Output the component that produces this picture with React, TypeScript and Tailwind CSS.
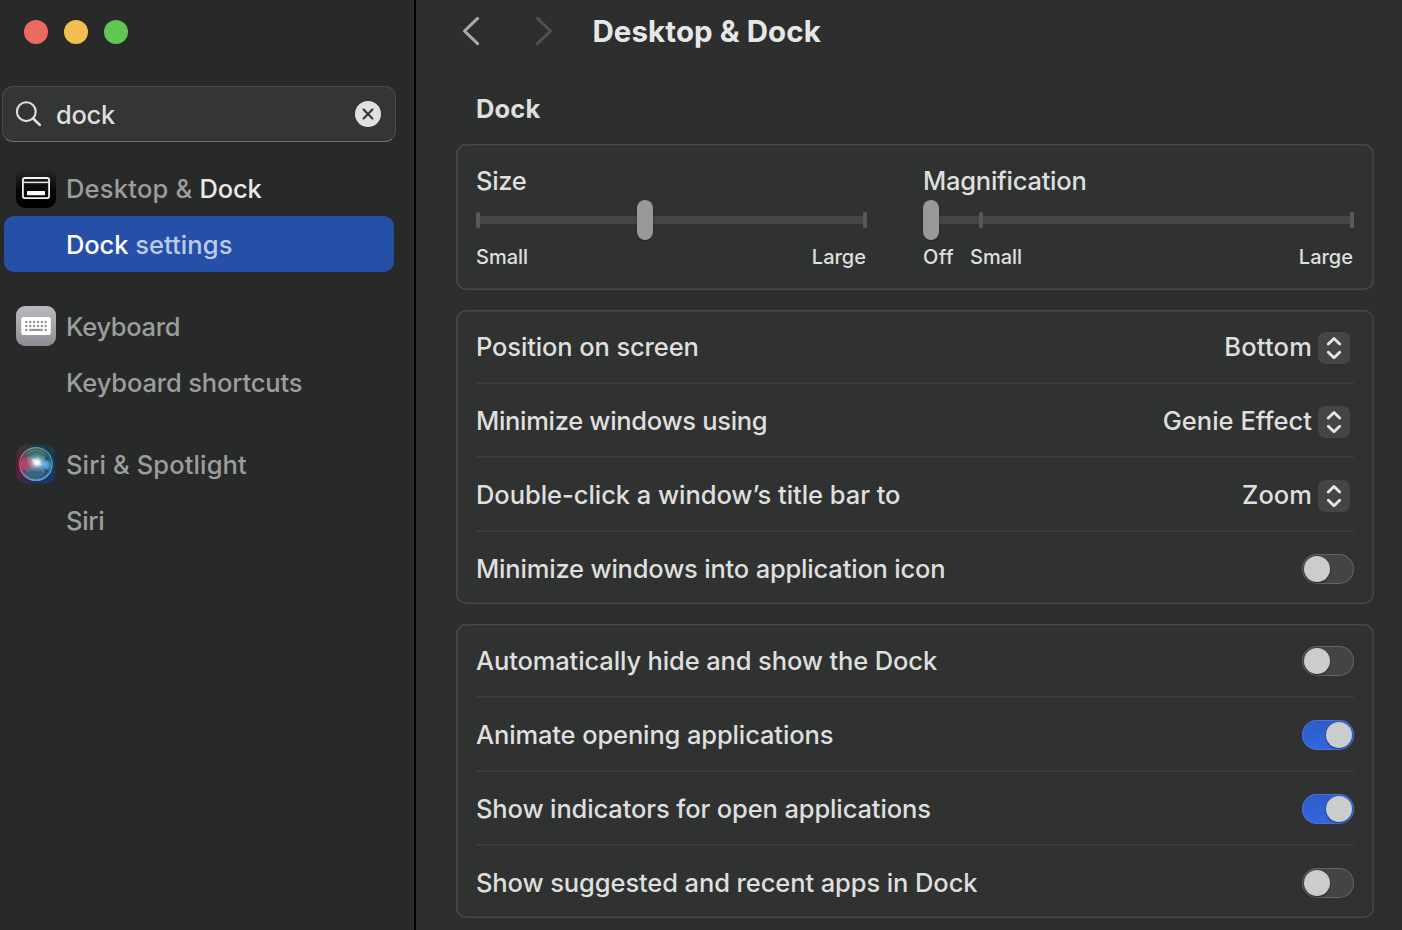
import { useState, type ReactNode } from 'react';

function DesktopDockIcon() {
  return (
    <svg width="40" height="40" viewBox="0 0 40 40" className="shrink-0">
      <defs>
        <linearGradient id="deskBg" x1="0" y1="0" x2="0" y2="1">
          <stop offset="0" stopColor="#2a2a2a" />
          <stop offset="0.6" stopColor="#030303" />
          <stop offset="1" stopColor="#000" />
        </linearGradient>
      </defs>
      <rect width="40" height="40" rx="9" fill="url(#deskBg)" />
      <rect x="6.9" y="10" width="26.2" height="20.2" rx="2.2" fill="none" stroke="#f2f2f2" strokeWidth="1.8" />
      <path d="M7 14.4h26" stroke="#e6e6e6" strokeWidth="1.5" />
      <rect x="11" y="23" width="18" height="4.2" rx="0.8" fill="#fff" />
    </svg>
  );
}

function KeyboardIcon() {
  const cols = [10.3, 14.2, 18.1, 22, 25.9, 29.7];
  return (
    <svg width="40" height="40" viewBox="0 0 40 40" className="shrink-0">
      <defs>
        <linearGradient id="kbBg" x1="0" y1="0" x2="0" y2="1">
          <stop offset="0" stopColor="#bcbabf" />
          <stop offset="1" stopColor="#8f8d93" />
        </linearGradient>
      </defs>
      <rect width="40" height="40" rx="9" fill="url(#kbBg)" />
      <rect x="5.2" y="11" width="29.6" height="18" rx="2.6" fill="#fff" />
      {cols.map((x) => (
        <g key={x} fill="#96949a">
          <rect x={x - 1.1} y="14.9" width="2.2" height="2.2" />
          <rect x={x - 1.1} y="18.9" width="2.2" height="2.2" />
        </g>
      ))}
      <g fill="#96949a">
        <rect x="9.2" y="22.8" width="2.2" height="2.2" />
        <rect x="13.1" y="22.8" width="13.8" height="2.2" />
        <rect x="28.6" y="22.8" width="2.2" height="2.2" />
      </g>
    </svg>
  );
}

function SiriIcon() {
  return (
    <svg width="40" height="40" viewBox="0 0 40 40" className="shrink-0">
      <defs>
        <linearGradient id="siriBg" x1="0" y1="0" x2="1" y2="0">
          <stop offset="0" stopColor="#7a1232" />
          <stop offset="0.45" stopColor="#2a2340" />
          <stop offset="1" stopColor="#12365c" />
        </linearGradient>
        <linearGradient id="siriTop" x1="0.4" y1="0" x2="0.6" y2="1">
          <stop offset="0" stopColor="#1f4a40" stopOpacity="0.6" />
          <stop offset="0.5" stopColor="#1f4a40" stopOpacity="0" />
          <stop offset="1" stopColor="#143a80" stopOpacity="0.65" />
        </linearGradient>
        <linearGradient id="siriRing" x1="0" y1="0.6" x2="1" y2="0.4">
          <stop offset="0" stopColor="#c84c74" />
          <stop offset="0.4" stopColor="#78988c" />
          <stop offset="1" stopColor="#3f9a90" />
        </linearGradient>
        <linearGradient id="siriRing2" x1="0" y1="0" x2="0" y2="1">
          <stop offset="0.5" stopColor="#56a8d8" stopOpacity="0" />
          <stop offset="1" stopColor="#5aa4d4" />
        </linearGradient>
        <radialGradient id="siriCore">
          <stop offset="0" stopColor="#fff" />
          <stop offset="0.25" stopColor="#f0fbff" stopOpacity="0.85" />
          <stop offset="0.6" stopColor="#b8e4ea" stopOpacity="0.35" />
          <stop offset="1" stopColor="#a8e0e8" stopOpacity="0" />
        </radialGradient>
        <radialGradient id="siriPink">
          <stop offset="0.4" stopColor="#d0406e" stopOpacity="0.8" />
          <stop offset="0.85" stopColor="#d84a78" stopOpacity="0.7" />
          <stop offset="1" stopColor="#d84a78" stopOpacity="0" />
        </radialGradient>
        <radialGradient id="siriBlue">
          <stop offset="0.4" stopColor="#58a2e6" stopOpacity="0.9" />
          <stop offset="0.85" stopColor="#3c82cc" stopOpacity="0.75" />
          <stop offset="1" stopColor="#3c82cc" stopOpacity="0" />
        </radialGradient>
      </defs>
      <rect x="0.8" y="0.8" width="38.4" height="38.4" rx="8.6" fill="url(#siriBg)" />
      <rect x="0.8" y="0.8" width="38.4" height="38.4" rx="8.6" fill="url(#siriTop)" />
      <circle cx="20" cy="20" r="16" fill="#3c6880" fillOpacity="0.4" />
      <ellipse cx="12.5" cy="20" rx="8" ry="8" fill="url(#siriPink)" />
      <ellipse cx="20" cy="12" rx="10" ry="7" fill="#4a9a80" fillOpacity="0.45" />
      <ellipse cx="19" cy="28" rx="10" ry="6" fill="#3a7aa4" fillOpacity="0.6" />
      <ellipse cx="30" cy="21" rx="6" ry="5.6" fill="url(#siriBlue)" />
      <path d="M22 21l6.5 7.5" stroke="#c87890" strokeWidth="1.1" strokeOpacity="0.8" />
      <ellipse cx="21" cy="18.5" rx="11" ry="10" fill="url(#siriCore)" />
      <path d="M15.5 14.5L22 16l4 5.5-6.5-1z" fill="#fff" fillOpacity="0.5" />
      <circle cx="20" cy="20" r="16.2" fill="none" stroke="url(#siriRing)" strokeWidth="1.5" />
      <circle cx="20" cy="20" r="16.2" fill="none" stroke="url(#siriRing2)" strokeWidth="1.5" />
      <circle cx="20" cy="20.6" r="14.4" fill="none" stroke="url(#siriRing)" strokeWidth="0.8" strokeOpacity="0.7" />
    </svg>
  );
}

function SidebarRow({ icon, selected, children }: { icon?: ReactNode; selected?: boolean; children: ReactNode }) {
  return (
    <div
      className={
        selected
          ? 'mx-1 flex h-14 w-[390px] items-center rounded-[10px] bg-[#264fa8] pl-3 text-[#bcc9e8]'
          : 'mx-1 flex h-14 w-[390px] items-center pl-3 text-[#9c9d9d]'
      }
    >
      <div className="mr-2.5 flex w-10">{icon}</div>
      <div className="whitespace-pre pt-0.5">{children}</div>
    </div>
  );
}

function Toggle({ initial = false }: { initial?: boolean }) {
  const [on, setOn] = useState(initial);
  return (
    <button
      role="switch"
      aria-checked={on}
      onClick={() => setOn(!on)}
      className={
        on
          ? 'mt-0.5 flex h-[30px] w-[52px] items-center justify-end rounded-full bg-linear-to-b from-[#2c5cc6] to-[#3467de] px-0.5 inset-ring-1 inset-ring-[#4672d8]'
          : 'mt-0.5 flex h-[30px] w-[52px] items-center justify-start rounded-full bg-[#434544] px-0.5 inset-ring-1 inset-ring-[#626463]'
      }
    >
      <span className="size-[26px] rounded-full bg-[#cbcdcc] shadow-[0_1px_2px_rgba(0,0,0,0.45)]" />
    </button>
  );
}

function Popup({ children }: { children: ReactNode }) {
  return (
    <button className="flex items-center pr-1">
      <span className="mr-1.5 pt-0.5">{children}</span>
      <span className="mt-1 flex size-8 items-center justify-center rounded-[7px] bg-[#444645]">
        <svg width="32" height="32" viewBox="0 0 32 32" fill="none" stroke="#e4e5e4" strokeWidth="2.9" strokeLinecap="round" strokeLinejoin="round">
          <path d="M10.3 12L16 6.5l5.7 5.5M10.3 20.2l5.7 5.5 5.7-5.5" />
        </svg>
      </span>
    </button>
  );
}

function Row({ label, children }: { label: ReactNode; children: ReactNode }) {
  return (
    <div className="flex h-[74px] items-center justify-between border-b-2 border-[#3a3c3b] last:h-[72px] last:border-b-0">
      <span className="pt-0.5">{label}</span>
      {children}
    </div>
  );
}

function Card({ children }: { children: ReactNode }) {
  return (
    <section className="mb-5 w-[918px] rounded-[10px] bg-[#303231] px-5 inset-ring-[1.5px] inset-ring-[#474948]">
      {children}
    </section>
  );
}

function Tick() {
  return <span className="h-4 w-1 rounded-[1.5px] bg-[#585a59]" />;
}

const thumb = 'absolute top-0 h-10 w-4 rounded-full bg-[#979998] shadow-[0_1px_2px_rgba(0,0,0,0.4)]';

export default function App() {
  return (
    <div className="flex h-[930px] w-[1402px] overflow-hidden bg-[#2d2f2e] font-['Inter',sans-serif] text-[25.5px] leading-8 font-[450] tracking-[-0.13px] text-[#dedfde]">
      <aside className="h-full w-[416px] shrink-0 border-r-2 border-black bg-[#282a29]">
        <div className="flex gap-4 pt-5 pl-6">
          <span className="size-6 rounded-full bg-[#ed6a5e]" />
          <span className="size-6 rounded-full bg-[#f5bf4f]" />
          <span className="size-6 rounded-full bg-[#61c554]" />
        </div>
        <div className="mt-[42px] ml-0.5 flex h-14 w-[394px] items-center rounded-[11px] border border-[#484a49] border-b-[#6c6e6d] bg-[#343535] pr-[14px] pl-3">
          <svg width="28" height="28" viewBox="0 0 28 28" fill="none" stroke="#dfe0df" strokeLinecap="round">
            <circle cx="11.3" cy="11.7" r="9.4" strokeWidth="2.1" />
            <path d="M18.4 18.7l6.4 6.2" strokeWidth="2.7" />
          </svg>
          <span className="ml-[13px] flex-1 pt-0.5 tracking-[-0.3px]">dock</span>
          <svg width="26" height="26" viewBox="0 0 26 26">
            <circle cx="13" cy="13" r="13" fill="#dfe0df" />
            <path d="M8.6 8.6l8.8 8.8M17.4 8.6l-8.8 8.8" stroke="#343535" strokeWidth="2.1" strokeLinecap="round" />
          </svg>
        </div>
        <nav className="mt-[18px]">
          <SidebarRow icon={<DesktopDockIcon />}>
            <span className="tracking-[0.22px]">Desktop &amp; </span><span className="text-[#e8e9e8]">Dock</span>
          </SidebarRow>
          <SidebarRow selected>
            <span className="text-white">Dock</span><span className="tracking-[0.08px]"> settings</span>
          </SidebarRow>
          <div className="h-[26px]" />
          <SidebarRow icon={<KeyboardIcon />}><span className="tracking-[-0.32px]">Keyboard</span></SidebarRow>
          <SidebarRow><span className="tracking-[-0.15px]">Keyboard shortcuts</span></SidebarRow>
          <div className="h-[26px]" />
          <SidebarRow icon={<SiriIcon />}><span className="tracking-[0.13px]">Siri &amp; Spotlight</span></SidebarRow>
          <SidebarRow><span className="tracking-[-0.3px]">Siri</span></SidebarRow>
        </nav>
      </aside>

      <main className="flex-1 pl-10">
        <header className="flex h-[62px] items-center">
          <svg width="30" height="32" viewBox="0 0 30 32" fill="none" stroke="#a9abaa" strokeWidth="3" strokeLinecap="round" strokeLinejoin="round">
            <path d="M21.6 3.3L8.5 16l13.1 12.7" />
          </svg>
          <svg width="30" height="32" viewBox="0 0 30 32" fill="none" stroke="#505251" strokeWidth="3" strokeLinecap="round" strokeLinejoin="round" className="ml-[42px]">
            <path d="M9.4 3.3L22.5 16 9.4 28.7" />
          </svg>
          <h1 className="ml-[34.5px] text-[29.5px] font-bold tracking-[0.07px] text-[#e6e7e6]">Desktop &amp; Dock</h1>
        </header>
        <h2 className="mt-[31px] mb-[19px] ml-5 font-bold tracking-[0.15px]">Dock</h2>

        <Card>
          <div className="flex h-[146px] justify-between pt-[21px]">
            <div className="w-[391px]">
              <div className="tracking-[-0.3px]">Size</div>
              <div className="relative mt-[3px] flex h-10 items-center">
                <Tick />
                <span className="h-2 flex-1 bg-[#444645]" />
                <Tick />
                <span className={`${thumb} left-[161px]`} />
              </div>
              <div className="mt-px flex justify-between pr-px text-[20px] tracking-[0px]">
                <span>Small</span>
                <span>Large</span>
              </div>
            </div>
            <div className="w-[431px]">
              <div className="tracking-[-0.25px]">Magnification</div>
              <div className="relative mt-[3px] flex h-10 items-center">
                <span className="h-2 w-14 bg-[#444645]" />
                <Tick />
                <span className="h-2 flex-1 bg-[#444645]" />
                <Tick />
                <span className={`${thumb} left-0`} />
              </div>
              <div className="mt-px flex pr-px text-[20px] tracking-[0px]">
                <span className="w-[47px] tracking-[0.4px]">Off</span>
                <span className="flex-1">Small</span>
                <span>Large</span>
              </div>
            </div>
          </div>
        </Card>

        <Card>
          <Row label="Position on screen"><Popup><span className="tracking-[0.2px]">Bottom</span></Popup></Row>
          <Row label={<span className="tracking-[-0.31px]">Minimize windows using</span>}><Popup><span className="tracking-[0.03px]">Genie Effect</span></Popup></Row>
          <Row label={<span className="tracking-[-0.05px]">Double-click a window’s title bar to</span>}><Popup><span className="tracking-[0.05px]">Zoom</span></Popup></Row>
          <Row label={<span className="tracking-[-0.19px]">Minimize windows into application icon</span>}><Toggle /></Row>
        </Card>

        <Card>
          <Row label="Automatically hide and show the Dock"><Toggle /></Row>
          <Row label="Animate opening applications"><Toggle initial /></Row>
          <Row label="Show indicators for open applications"><Toggle initial /></Row>
          <Row label={<span className="tracking-[-0.1px]">Show suggested and recent apps in Dock</span>}><Toggle /></Row>
        </Card>
      </main>
    </div>
  );
}
